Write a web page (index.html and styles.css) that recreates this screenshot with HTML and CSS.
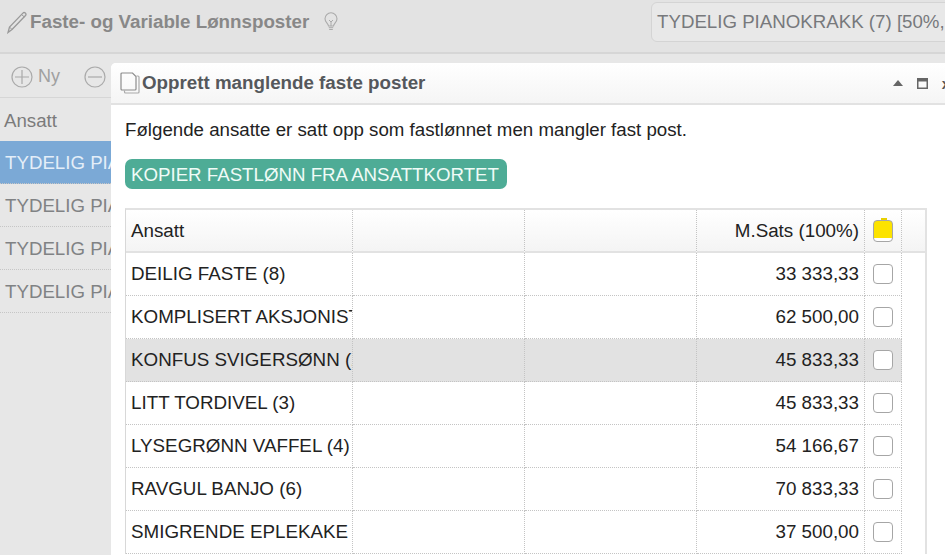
FILE: index.html
```html
<!doctype html>
<html lang="en">
<head>
    <meta charset="UTF-8">
    <title>Faste- og Variable Lønnsposter</title>
    <link rel="stylesheet" href="styles.css">
</head>
<body>
<div class="page">
    <header class="topbar">
        <svg class="pencil" width="22" height="24" viewBox="0 0 22 24">
            <path d="M6 19.500 19.500 5.500c.8-.9.6-1.700-.2-2.400s-1.700-.7-2.400 0L3.500 17 2 22.500z" fill="none" stroke="#999" stroke-width="1.300"/>
            <path d="M3.500 17 6 19.500M15.500 4.500l2.800 2.400" fill="none" stroke="#999" stroke-width="1"/>
        </svg>
        <h1 class="page-title">Faste- og Variable Lønnsposter</h1>
        <svg class="bulb" width="14" height="20" viewBox="0 0 14 20">
            <path d="M4.500 14C4.300 11.500 1 10.500 1 6.800a6 6 0 0 1 12 0c0 3.700-3.300 4.700-3.500 7.200z" fill="none" stroke="#aaa" stroke-width="1.100"/>
            <path d="M5 8l2 2 2-2M7 10v4M4.800 15.700h4.400M5.200 17.500h3.600" fill="none" stroke="#aaa" stroke-width="1"/>
        </svg>
        <div class="employee-select">TYDELIG PIANOKRAKK (7) [50%,</div>
    </header>

    <div class="toolbar">
        <span class="tool">
            <svg width="22" height="22" viewBox="0 0 22 22">
                <circle cx="11" cy="11" r="10" fill="none" stroke="#aaa" stroke-width="1.200"/>
                <path d="M4 11h14M11 4v14" stroke="#aaa" stroke-width="1.200"/>
            </svg>
            Ny
        </span>
        <span class="tool tool-del">
            <svg width="22" height="22" viewBox="0 0 22 22">
                <circle cx="11" cy="11" r="10" fill="none" stroke="#aaa" stroke-width="1.200"/>
                <path d="M4 11h14" stroke="#aaa" stroke-width="1.200"/>
            </svg>
        </span>
    </div>

    <ul class="side-list">
        <li class="side-head">Ansatt</li>
        <li class="side-row selected">TYDELIG PIANOKRAKK (7)</li>
        <li class="side-row">TYDELIG PIANOKRAKK (7)</li>
        <li class="side-row">TYDELIG PIANOKRAKK (7)</li>
        <li class="side-row">TYDELIG PIANOKRAKK (7)</li>
    </ul>
</div>

<div class="dialog">
    <div class="dialog-title">
        <svg class="copy-icon" width="20" height="22" viewBox="0 0 20 22">
            <path d="M1 2a1 1 0 0 1 1-1h10.500L16 4.500V17a1 1 0 0 1-1 1H2a1 1 0 0 1-1-1z" fill="none" stroke="#8c8c8c" stroke-width="1.200"/>
            <path d="M16.500 4h1.500a1 1 0 0 1 1 1v15a1 1 0 0 1-1 1H5.500a1 1 0 0 1-1-1v-1.500" fill="none" stroke="#aaa" stroke-width="1.200"/>
        </svg>
        <span class="dialog-name">Opprett manglende faste poster</span>
        <span class="win-btns">
            <svg width="10" height="6" viewBox="0 0 10 6"><path d="M0 6 5 0l5 6z" fill="#666"/></svg>
            <svg width="11" height="11" viewBox="0 0 11 11"><rect x=".75" y=".75" width="9.500" height="9.500" fill="none" stroke="#666" stroke-width="1.500"/><rect x="1" y="1" width="9" height="2.500" fill="#666"/></svg>
            <span class="win-close">x</span>
        </span>
    </div>
    <div class="dialog-body">
        <p class="intro">Følgende ansatte er satt opp som fastlønnet men mangler fast post.</p>
        <button class="copy-btn">KOPIER FASTLØNN FRA ANSATTKORTET</button>
        <table class="grid">
            <colgroup>
                <col class="c-name"><col class="c-empty"><col class="c-empty"><col class="c-sum"><col class="c-check"><col class="c-rest">
            </colgroup>
            <thead>
                <tr>
                    <th>Ansatt</th><th></th><th></th><th class="num">M.Sats (100%)</th>
                    <th class="chk"><span class="box box-all"></span></th><th></th>
                </tr>
            </thead>
            <tbody>
                <tr><td>DEILIG FASTE (8)</td><td></td><td></td><td class="num">33 333,33</td><td class="chk"><span class="box"></span></td></tr>
                <tr><td>KOMPLISERT AKSJONIST (1)</td><td></td><td></td><td class="num">62 500,00</td><td class="chk"><span class="box"></span></td></tr>
                <tr class="hover"><td>KONFUS SVIGERSØNN (2)</td><td></td><td></td><td class="num">45 833,33</td><td class="chk"><span class="box"></span></td></tr>
                <tr><td>LITT TORDIVEL (3)</td><td></td><td></td><td class="num">45 833,33</td><td class="chk"><span class="box"></span></td></tr>
                <tr><td>LYSEGRØNN VAFFEL (4)</td><td></td><td></td><td class="num">54 166,67</td><td class="chk"><span class="box"></span></td></tr>
                <tr><td>RAVGUL BANJO (6)</td><td></td><td></td><td class="num">70 833,33</td><td class="chk"><span class="box"></span></td></tr>
                <tr><td>SMIGRENDE EPLEKAKE (5)</td><td></td><td></td><td class="num">37 500,00</td><td class="chk"><span class="box"></span></td></tr>
            </tbody>
        </table>
    </div>
</div>
</body>
</html>
```

FILE: styles.css
```css
*
{
    box-sizing: border-box;
    font-family: "Liberation Sans", Arial, sans-serif;
}

html, body
{
    margin: 0;
    height: 100%;
    overflow: hidden;
    background-color: #e7e7e7;
}

.page
{
    height: 555px;
    overflow: hidden;
}

.topbar
{
    display: flex;
    align-items: center;
    height: 54px;
    padding: 0 0 9px 6px;
    background-color: #e3e3e3;
    border-bottom: 2px solid #d6d6d6;
}

.page-title
{
    margin: 0 0 0 2px;
    font-size: 18.750px;
    font-weight: bold;
    white-space: nowrap;
    color: #888;
}

.bulb
{
    margin-left: 15px;
}

.employee-select
{
    margin-left: auto;
    flex: none;
    width: 320px;
    height: 40px;
    margin-right: -26px;
    padding: 8px 5px;
    font-size: 18.700px;
    white-space: nowrap;
    overflow: hidden;
    color: #77797c;
    background-color: #e8e8e8;
    border: 1px solid #d4d4d4;
    border-radius: 6px;
}

.toolbar
{
    display: flex;
    align-items: center;
    height: 44px;
    padding: 2px 0 0 11px;
    font-size: 18px;
    color: #a0a0a0;
    border-bottom: 1px solid #d6d6d6;
}

.tool
{
    display: flex;
    align-items: center;
    gap: 5px;
}

.tool-del
{
    margin-left: 24px;
}

.side-list
{
    list-style: none;
    margin: 0;
    padding: 0;
    width: 111px;
    overflow: hidden;
}

.side-head
{
    height: 43px;
    padding: 12px 4px;
    font-size: 18.700px;
    color: #7b7b7b;
}

.side-row
{
    height: 43px;
    padding: 11px 5px;
    font-size: 18.700px;
    color: #808284;
    white-space: nowrap;
    border-bottom: 1px dotted #c6c6c6;
}

.selected
{
    color: #e4eef8;
    background-color: #7ba9d6;
}

.dialog
{
    position: absolute;
    left: 111px;
    top: 63px;
    width: 834px;
    height: 492px;
    overflow: hidden;
    background-color: #fff;
    border-radius: 5px 0 0 0;
}

.dialog-title
{
    display: flex;
    align-items: center;
    height: 42px;
    padding-left: 9px;
    background: linear-gradient(#fff, #f5f5f5);
    border-bottom: 2px solid #e2e2e2;
}

.copy-icon
{
    flex: none;
}

.dialog-name
{
    margin-left: 2px;
    font-size: 18.750px;
    font-weight: bold;
    white-space: nowrap;
    color: #55585c;
}

.win-btns
{
    display: flex;
    align-items: center;
    gap: 14px;
    margin-left: auto;
    margin-right: -5px;
}

.win-close
{
    font-size: 15px;
    font-weight: bold;
    color: #555;
}

.dialog-body
{
    padding: 14px 0 0 14px;
}

.intro
{
    margin: 0;
    font-size: 18.700px;
    line-height: 22px;
    color: #222;
}

.copy-btn
{
    display: block;
    margin-top: 18px;
    height: 30px;
    padding: 1px 8px 0 6px;
    font-size: 18.700px;
    white-space: nowrap;
    color: #f0fbf7;
    background-color: #4eac96;
    border: none;
    border-radius: 7px;
}

.grid
{
    margin-top: 19px;
    width: 802px;
    table-layout: fixed;
    border-collapse: separate;
    border-spacing: 0;
    border-top: 2px solid #e2e2e2;
    border-left: 1px solid #d8d8d8;
    border-right: 2px solid #e2e2e2;
}

.c-name { width: 227px; }
.c-empty { width: 172px; }
.c-sum { width: 168px; }
.c-check { width: 37px; }

th, td
{
    height: 43px;
    padding: 0 5px;
    font-size: 18.800px;
    font-weight: normal;
    text-align: left;
    color: #222;
    white-space: nowrap;
    overflow: hidden;
    border-right: 1px dotted #c4c4c4;
    border-bottom: 1px dotted #c4c4c4;
}

th
{
    background: linear-gradient(#fff, #f4f4f4);
    border-bottom: 2px solid #e2e2e2;
}

th:last-child
{
    border-right: none;
}

.num
{
    text-align: right;
}

th.chk, td.chk
{
    padding: 0 5px 0 4px;
}

.hover td
{
    background-color: #e2e2e2;
}

.box
{
    display: block;
    width: 20px;
    height: 20px;
    margin: 0 auto;
    background-color: #fff;
    border: 1.500px solid #a6a6a6;
    border-radius: 4px;
}

.box-all
{
    position: relative;
    height: 22px;
    background: linear-gradient(#fce300 85%, #fff 85%);
}

.box-all::before
{
    content: "";
    position: absolute;
    left: 7px;
    top: -3px;
    width: 6px;
    height: 2px;
    background-color: #e8d000;
}
```
